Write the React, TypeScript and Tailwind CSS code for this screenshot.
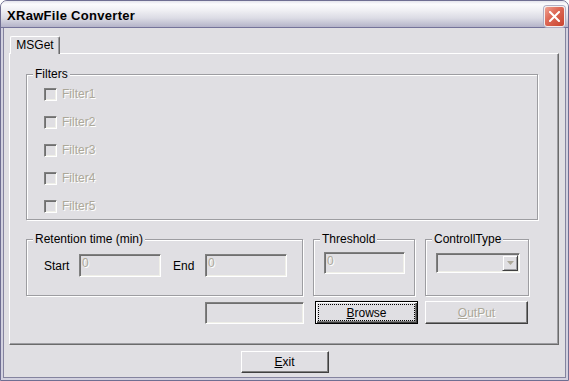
import React from "react";

const dis = "text-[#aca899] [text-shadow:1px_1px_0_#ffffff]";

function GroupBox({ label, className, children }: { label: string; className: string; children?: React.ReactNode }) {
  return (
    <div className={`relative border border-[#9d9da1] shadow-[inset_1px_1px_0_#ffffff,1px_1px_0_#ffffff] ${className}`}>
      <span className="absolute -top-[8px] left-[6px] px-[2px] leading-[14px] bg-[#e0dfe3] whitespace-nowrap">{label}</span>
      {children}
    </div>
  );
}

function Sunken({ className, children }: { className: string; children?: React.ReactNode }) {
  return (
    <div
      className={`border border-t-[#808080] border-l-[#808080] border-b-white border-r-white shadow-[inset_1px_1px_0_#6f6f6f,inset_-1px_-1px_0_#efefe8] bg-[#e0dfe3] ${className}`}
    >
      {children}
    </div>
  );
}

function Check({ label }: { label: string }) {
  return (
    <div className="h-[14px] flex items-center">
      <span className="w-[13px] h-[13px] border border-t-[#808080] border-l-[#808080] border-b-white border-r-white shadow-[inset_1px_1px_0_#6f6f6f,inset_-1px_-1px_0_#efefe8] bg-[#e0dfe3]" />
      <span className={`ml-[5px] leading-[14px] ${dis}`}>{label}</span>
    </div>
  );
}

const raised =
  "border border-t-white border-l-white border-b-[#404040] border-r-[#404040] shadow-[inset_-1px_-1px_0_#808080] bg-[#e0dfe3] flex items-center justify-center";

export default function App() {
  return (
    <div className="w-[569px] h-[381px] flex flex-col bg-[#e0dfe3] border border-[#6f6e92] rounded-t-[7px] overflow-hidden font-['Liberation_Sans',Arial,sans-serif] text-[12px] text-black">
      {/* Title bar */}
      <div className="h-[27px] shrink-0 flex items-center justify-between pl-[6px] pr-[3px] pt-[4px] border-b border-[#74739a] bg-[linear-gradient(to_bottom,#e4e4ec_0%,#fbfbfd_12%,#f0f0f4_35%,#dcdce5_65%,#b4b3c9_100%)]">
        <span className="font-bold text-[13px] tracking-[0.3px] leading-[16px]">XRawFile Converter</span>
        <div className="w-[21px] h-[21px] rounded-[3px] border border-[#f4eeee] shadow-[0_0_0_1px_#b0aec4] bg-[linear-gradient(135deg,#f0a292_0%,#de6a58_40%,#c8442f_100%)] flex items-center justify-center">
          <svg width="11" height="11" viewBox="0 0 11 11">
            <path d="M1 1L10 10M10 1L1 10" stroke="#ffffff" strokeWidth="2" strokeLinecap="square" />
          </svg>
        </div>
      </div>

      {/* Body */}
      <div className="flex-1 flex flex-col border-x-2 border-b-2 border-[#d2d1df] shadow-[inset_1px_0_0_#85849f,inset_-1px_0_0_#85849f,inset_0_-1px_0_#85849f] pt-[8px]">
        {/* Tab strip */}
        <div className="flex pl-[7px]">
          <div className="relative z-10 w-[50px] h-[18px] -mb-[1px] bg-[#e0dfe3] border-t border-l border-white border-r border-r-[#6b6b6b] shadow-[inset_-1px_0_0_#9d9da1] rounded-t-[2px] flex justify-center pt-[1px] leading-[14px]">
            MSGet
          </div>
        </div>

        {/* Panel */}
        <div className="ml-[6px] w-[550px] h-[292px] border border-t-white border-l-white border-r-[#6b6b6b] border-b-[#6b6b6b] shadow-[inset_-1px_-1px_0_#9d9da1] pl-[16px] pt-[20px] flex flex-col">
          <GroupBox label="Filters" className="w-[512px] h-[146px]">
            <div className="flex flex-col gap-[14px] pt-[12px] pl-[17px]">
              <Check label="Filter1" />
              <Check label="Filter2" />
              <Check label="Filter3" />
              <Check label="Filter4" />
              <Check label="Filter5" />
            </div>
          </GroupBox>

          <div className="flex mt-[19px] gap-[10px]">
            <GroupBox label="Retention time (min)" className="w-[277px] h-[57px]">
              <div className="flex items-center pt-[14px] pl-[17px]">
                <span className="w-[35px]">Start</span>
                <Sunken className="w-[82px] h-[23px] pl-[2px] pt-[2px] leading-[12px]">
                  <span className={dis}>0</span>
                </Sunken>
                <span className="ml-[12px] w-[32px]">End</span>
                <Sunken className="w-[82px] h-[23px] pl-[2px] pt-[2px] leading-[12px]">
                  <span className={dis}>0</span>
                </Sunken>
              </div>
            </GroupBox>
            <GroupBox label="Threshold" className="w-[102px] h-[57px]">
              <div className="pt-[12px] pl-[10px]">
                <Sunken className="w-[81px] h-[22px] pl-[2px] pt-[2px] leading-[12px]">
                  <span className={dis}>0</span>
                </Sunken>
              </div>
            </GroupBox>
            <GroupBox label="ControllType" className="w-[104px] h-[57px]">
              <div className="pt-[13px] pl-[10px]">
                <Sunken className="w-[84px] h-[20px] flex items-center justify-end pr-[1px]">
                  <div className="w-[16px] h-[16px] border border-t-[#e0dfe3] border-l-[#e0dfe3] border-b-[#404040] border-r-[#404040] shadow-[inset_1px_1px_0_#ffffff,inset_-1px_-1px_0_#9d9da1] flex items-center justify-center">
                    <svg width="7" height="4" viewBox="0 0 7 4">
                      <path d="M0 0H7L3.5 4Z" fill="#aca899" />
                    </svg>
                  </div>
                </Sunken>
              </div>
            </GroupBox>
          </div>

          <div className="flex items-start mt-[5px] pl-[179px]">
            <Sunken className="w-[99px] h-[22px] mt-[1px]" />
            <div className="ml-[11px] w-[103px] h-[23px] border border-black shadow-[inset_1px_1px_0_#ffffff,inset_-1px_-1px_0_#404040,inset_-2px_-2px_0_#808080] bg-[#e0dfe3] flex items-center justify-center outline-1 outline-dotted outline-black outline-offset-[-4px]">
              <span>
                <span className="underline underline-offset-[1px]">B</span>rowse
              </span>
            </div>
            <div className={`ml-[7px] w-[103px] h-[23px] ${raised}`}>
              <span className={dis}>
                <span className="underline underline-offset-[1px]">O</span>utPut
              </span>
            </div>
          </div>
        </div>

        <div className="flex justify-center mt-[6px]">
          <div className={`w-[88px] h-[22px] ${raised}`}>
            <span>
              <span className="underline underline-offset-[1px]">E</span>xit
            </span>
          </div>
        </div>
      </div>
    </div>
  );
}
